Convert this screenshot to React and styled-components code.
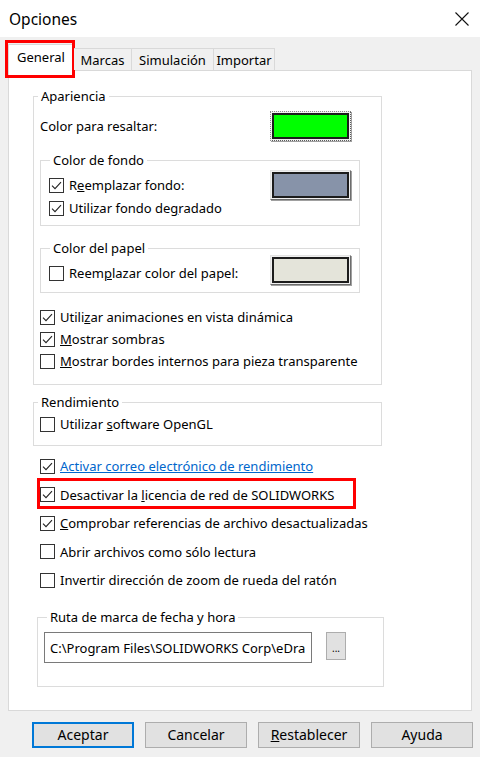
import React from "react";
import styled, { createGlobalStyle } from "styled-components";

const GlobalStyle = createGlobalStyle`
  html, body { margin: 0; padding: 0; background: #f0f0f0; }
  body { font-family: "Noto Sans", "Segoe UI", sans-serif; }
  #root { width: 480px; height: 757px; }
`;

const Window = styled.div`
  width: 480px;
  height: 757px;
  box-sizing: border-box;
  background: #f0f0f0;
  display: flex;
  flex-direction: column;
  overflow: hidden;
  color: #000;
  font-family: "Noto Sans", sans-serif;
  font-size: 13px;
`;

const TitleBar = styled.div`
  height: 37px;
  flex-shrink: 0;
  box-sizing: border-box;
  background: #fff;
  display: flex;
  align-items: center;
  justify-content: space-between;
  padding: 0 11px 0 9px;
`;

const Title = styled.span`
  font-size: 15.5px;
  line-height: 20px;
`;

const CloseButton = styled.span`
  width: 14px;
  height: 14px;
  display: flex;
`;

const TabStrip = styled.div`
  height: 33px;
  flex-shrink: 0;
  display: flex;
  align-items: flex-end;
  padding-left: 8px;
  position: relative;
  z-index: 1;
`;

const Tab = styled.div`
  position: relative;
  box-sizing: border-box;
  width: ${(p) => p.$w}px;
  height: ${(p) => (p.$active ? 27 : 22)}px;
  margin-bottom: ${(p) => (p.$active ? -1 : 0)}px;
  border: 1px solid #d9d9d9;
  border-bottom: none;
  border-left: ${(p) => (p.$active ? "1px solid #d9d9d9" : "none")};
  background: ${(p) => (p.$active ? "#fff" : "#f0f0f0")};
  display: flex;
  align-items: center;
  justify-content: center;
  padding-bottom: ${(p) => (p.$active ? 3 : 0)}px;
  font-size: 13px;
  line-height: 18px;
`;

const TabHighlight = styled.span`
  position: absolute;
  left: -4px;
  top: -5px;
  width: 70px;
  height: 38px;
  box-sizing: border-box;
  border: 3px solid #f00;
  pointer-events: none;
`;

const Panel = styled.div`
  margin: 0 8px;
  height: 641px;
  flex-shrink: 0;
  box-sizing: border-box;
  background: #fff;
  border: 1px solid #d9d9d9;
  padding: 18px 0 0 24px;
  display: flex;
  flex-direction: column;
  align-items: flex-start;
`;

const Group = styled.fieldset`
  margin: ${(p) => p.$mt || 0}px 0 0 ${(p) => p.$ml || 0}px;
  padding: 0;
  min-width: 0;
  width: ${(p) => p.$w}px;
  box-sizing: border-box;
  border: 1px solid #dcdcdc;
`;

const Legend = styled.legend`
  margin-left: ${(p) => p.$ml}px;
  padding: 0 3px;
  font-size: 13px;
  line-height: 14px;
`;

const GroupBody = styled.div`
  padding: ${(p) => p.$pad};
  display: flex;
  flex-direction: column;
  align-items: flex-start;
`;

const SwatchRow = styled.div`
  width: ${(p) => p.$w}px;
  height: 30px;
  display: flex;
  justify-content: space-between;
  align-items: ${(p) => (p.$bottom ? "flex-end" : "center")};
`;

const Label = styled.span`
  line-height: 18px;
  white-space: nowrap;
`;

const Swatch = styled.div`
  width: 81px;
  height: 30px;
  box-sizing: border-box;
  padding: 1px;
  background: #f0f0f0;
  border: 1px ${(p) => (p.$focus ? "dotted" : "solid")};
  border-color: ${(p) =>
    p.$focus ? "#8a8a8a #5a5a5a #5a5a5a #8a8a8a" : "#e3e3e3 #6d6d6d #6d6d6d #e3e3e3"};
  box-shadow: 1px 1px 0 #a0a0a0;
`;

const SwatchFill = styled.div`
  height: 100%;
  box-sizing: border-box;
  border: 2px solid #1c1c1c;
  background: ${(p) => p.$c};
`;

const CheckRow = styled.div`
  position: relative;
  display: flex;
  align-items: center;
  gap: 5px;
  height: ${(p) => p.$h || 22}px;
  margin-bottom: ${(p) => p.$mb || 0}px;
  white-space: nowrap;
  line-height: 18px;
`;

const Box = styled.span`
  width: 15px;
  height: 15px;
  box-sizing: border-box;
  border: 1px solid #333;
  background: #fff;
  display: flex;
  align-items: center;
  justify-content: center;
  flex-shrink: 0;
`;

const LinkText = styled.span`
  color: #0066cc;
  text-decoration: underline;
`;

const RowHighlight = styled.span`
  position: absolute;
  left: -3px;
  top: -2.5px;
  width: 319px;
  height: 31px;
  box-sizing: border-box;
  border: 3px solid #f00;
  pointer-events: none;
`;

const CheckList = styled.div`
  margin: ${(p) => p.$mt || 0}px 0 0 ${(p) => p.$ml || 0}px;
  display: flex;
  flex-direction: column;
  align-items: flex-start;
`;

const PathRow = styled.div`
  display: flex;
  align-items: center;
  gap: 14px;
`;

const PathInput = styled.div`
  width: 268px;
  height: 31px;
  box-sizing: border-box;
  border: 1px solid #7a7a7a;
  background: #fff;
  padding: 0 0 0 5px;
  display: flex;
  align-items: center;
  overflow: hidden;
  white-space: nowrap;
  line-height: 18px;
`;

const BrowseButton = styled.div`
  width: 20px;
  height: 28px;
  margin-top: -3px;
  box-sizing: border-box;
  background: #e1e1e1;
  border: 1px solid #adadad;
  display: flex;
  align-items: center;
  justify-content: center;
  font-size: 10px;
  line-height: 10px;
  padding-top: 4px;
`;

const ButtonBar = styled.div`
  margin-top: 11px;
  padding-left: 32px;
  display: flex;
  gap: 11px;
`;

const DialogButton = styled.div`
  width: 102px;
  height: 26px;
  box-sizing: border-box;
  background: #e1e1e1;
  border: ${(p) => (p.$primary ? "2px solid #0078d7" : "1px solid #adadad")};
  display: flex;
  align-items: center;
  justify-content: center;
  font-size: 14px;
  line-height: 18px;
`;

const Check = ({ checked }) => (
  <Box>
    {checked && (
      <svg width="13" height="13" viewBox="0 0 13 13">
        <polyline
          points="2,6.6 5,9.6 11,3.2"
          fill="none"
          stroke="#222"
          strokeWidth="1.1"
        />
      </svg>
    )}
  </Box>
);

const Option = ({ checked, h, mb, children, highlight }) => (
  <CheckRow $h={h} $mb={mb}>
    <Check checked={checked} />
    <Label>{children}</Label>
    {highlight && <RowHighlight />}
  </CheckRow>
);

export default function App() {
  return (
    <>
      <GlobalStyle />
      <Window>
        <TitleBar>
          <Title>Opciones</Title>
          <CloseButton>
            <svg width="14" height="14" viewBox="0 0 14 14">
              <path d="M0.5 0.5 L13.5 13.5 M13.5 0.5 L0.5 13.5" stroke="#111" strokeWidth="1.1" />
            </svg>
          </CloseButton>
        </TitleBar>

        <TabStrip>
          <Tab $active $w={66}>
            General
            <TabHighlight />
          </Tab>
          <Tab $w={58}>Marcas</Tab>
          <Tab $w={82}>Simulación</Tab>
          <Tab $w={61}>Importar</Tab>
        </TabStrip>

        <Panel>
          <Group $w={349}>
            <Legend $ml={4}>Apariencia</Legend>
            <GroupBody $pad="8px 0 12px 6px">
              <SwatchRow $w={311}>
                <Label>Color para resaltar:</Label>
                <Swatch $focus>
                  <SwatchFill $c="#00ff00" />
                </Swatch>
              </SwatchRow>

              <Group $w={320} $mt={12}>
                <Legend $ml={9}>Color de fondo</Legend>
                <GroupBody $pad="3px 0 9px 8px">
                  <SwatchRow $w={302}>
                    <Option checked h={18}>
                      R<u>e</u>emplazar fondo:
                    </Option>
                    <Swatch>
                      <SwatchFill $c="#8793a9" />
                    </Swatch>
                  </SwatchRow>
                  <Option checked h={16}>
                    Utilizar fondo de<u>g</u>radado
                  </Option>
                </GroupBody>
              </Group>

              <Group $w={320} $mt={15}>
                <Legend $ml={9}>Color del papel</Legend>
                <GroupBody $pad="0 0 7px 8px">
                  <SwatchRow $w={302} $bottom>
                    <Option h={18} mb={3}>
                      Reem<u>p</u>lazar color del papel:
                    </Option>
                    <Swatch>
                      <SwatchFill $c="#e4e4da" />
                    </Swatch>
                  </SwatchRow>
                </GroupBody>
              </Group>

              <CheckList $mt={13}>
                <Option checked>
                  Utili<u>z</u>ar animaciones en vista dinámica
                </Option>
                <Option checked>
                  <u>M</u>ostrar sombras
                </Option>
                <Option>
                  <u>M</u>ostrar bordes internos para pieza transparente
                </Option>
              </CheckList>
            </GroupBody>
          </Group>

          <Group $w={349} $mt={10}>
            <Legend $ml={4}>Rendimiento</Legend>
            <GroupBody $pad="4px 0 10px 6px">
              <Option>
                Utilizar <u>s</u>oftware OpenGL
              </Option>
            </GroupBody>
          </Group>

          <CheckList $mt={6} $ml={7}>
            <Option checked h={28.5}>
              <LinkText>Activar correo electrónico de rendimiento</LinkText>
            </Option>
            <Option checked h={28.5} highlight>
              Desactivar la <u>l</u>icencia de red de SOLIDWORKS
            </Option>
            <Option checked h={28.5}>
              <u>C</u>omprobar referencias de archivo desactualizadas
            </Option>
            <Option h={28.5}>Abrir archivos como sólo lectura</Option>
            <Option h={28.5}>Invertir dirección de zoom de rueda del ratón</Option>
          </CheckList>

          <Group $w={347} $mt={15.5} $ml={4}>
            <Legend $ml={9}>Ruta de marca de fecha y hora</Legend>
            <GroupBody $pad="8px 0 23px 6px">
              <PathRow>
                <PathInput>C:\Program Files\SOLIDWORKS Corp\eDra</PathInput>
                <BrowseButton>...</BrowseButton>
              </PathRow>
            </GroupBody>
          </Group>
        </Panel>

        <ButtonBar>
          <DialogButton $primary>Aceptar</DialogButton>
          <DialogButton>Cancelar</DialogButton>
          <DialogButton>
            <u>R</u>establecer
          </DialogButton>
          <DialogButton>Ayuda</DialogButton>
        </ButtonBar>
      </Window>
    </>
  );
}
